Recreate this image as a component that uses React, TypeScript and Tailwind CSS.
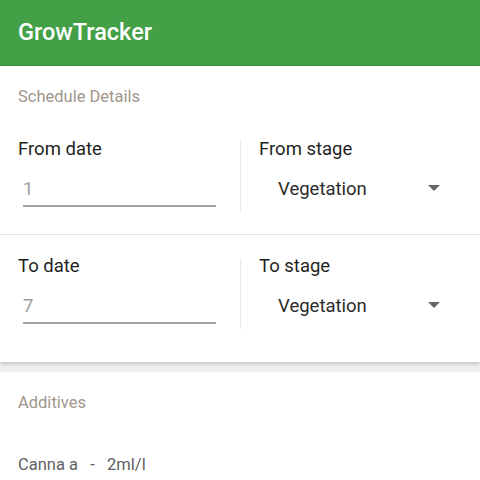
const ROWS = [
  { dateLabel: "From date", dateValue: "1", stageLabel: "From stage", stage: "Vegetation" },
  { dateLabel: "To date", dateValue: "7", stageLabel: "To stage", stage: "Vegetation" },
];

function StageRow({
  dateLabel,
  dateValue,
  stageLabel,
  stage,
  last,
}: {
  dateLabel: string;
  dateValue: string;
  stageLabel: string;
  stage: string;
  last?: boolean;
}) {
  return (
    <div className={`flex h-[117px] ${last ? "" : "border-b border-[#e4e4e4]"}`}>
      <div className="w-[240px] pl-[18px] pr-6 pt-[20px]">
        <p className="text-[18.5px] leading-[22px] text-[#1f1f1f]">{dateLabel}</p>
        <div className="ml-[5px] mt-[18px] border-b-2 border-[#a3a3a3] pb-[5px] text-[18.5px] leading-[22px] text-[#9e9e9e]">
          {dateValue}
        </div>
      </div>
      <div className="h-[70px] w-px self-center bg-[#e8e8e8]" />
      <div className="flex-1 pl-[18px] pt-[20px]">
        <p className="text-[18.5px] leading-[22px] text-[#1f1f1f]">{stageLabel}</p>
        <div className="mt-[18px] flex items-center pl-[19px] pr-[40px]">
          <span className="flex-1 text-[18.5px] leading-[22px] text-[#2b2b2b]">{stage}</span>
          <svg width="12" height="6" viewBox="0 0 12 6" className="mt-[-2px]">
            <path d="M0 0h12L6 6z" fill="#666" />
          </svg>
        </div>
      </div>
    </div>
  );
}

export default function App() {
  return (
    <div className="h-[480px] w-[480px] overflow-hidden bg-[#efefef] font-['Roboto',sans-serif]">
      <header className="flex h-[66px] items-center border-b border-[#37913c] bg-[#43a047] px-[18px]">
        <h1 className="text-[23.5px] font-medium text-white">GrowTracker</h1>
      </header>

      <section className="bg-white shadow-[0_2px_4px_rgba(0,0,0,0.18)]">
        <h2 className="px-[18px] pt-[21px] text-[16.5px] leading-[20px] text-[#a0958c]">Schedule Details</h2>
        <div className="mt-[11px] pb-[10px]">
          {ROWS.map((row, i) => (
            <StageRow key={row.dateLabel} {...row} last={i === ROWS.length - 1} />
          ))}
        </div>
      </section>

      <section className="mt-[10px] h-[120px] bg-white px-[18px] pt-[21px]">
        <h2 className="text-[16.5px] leading-[20px] text-[#a0958c]">Additives</h2>
        <p className="mt-[42px] text-[16.5px] leading-[20px] text-[#616161]">
          Canna a&nbsp;&nbsp;&nbsp;-&nbsp;&nbsp;&nbsp;2ml/l
        </p>
      </section>
    </div>
  );
}
